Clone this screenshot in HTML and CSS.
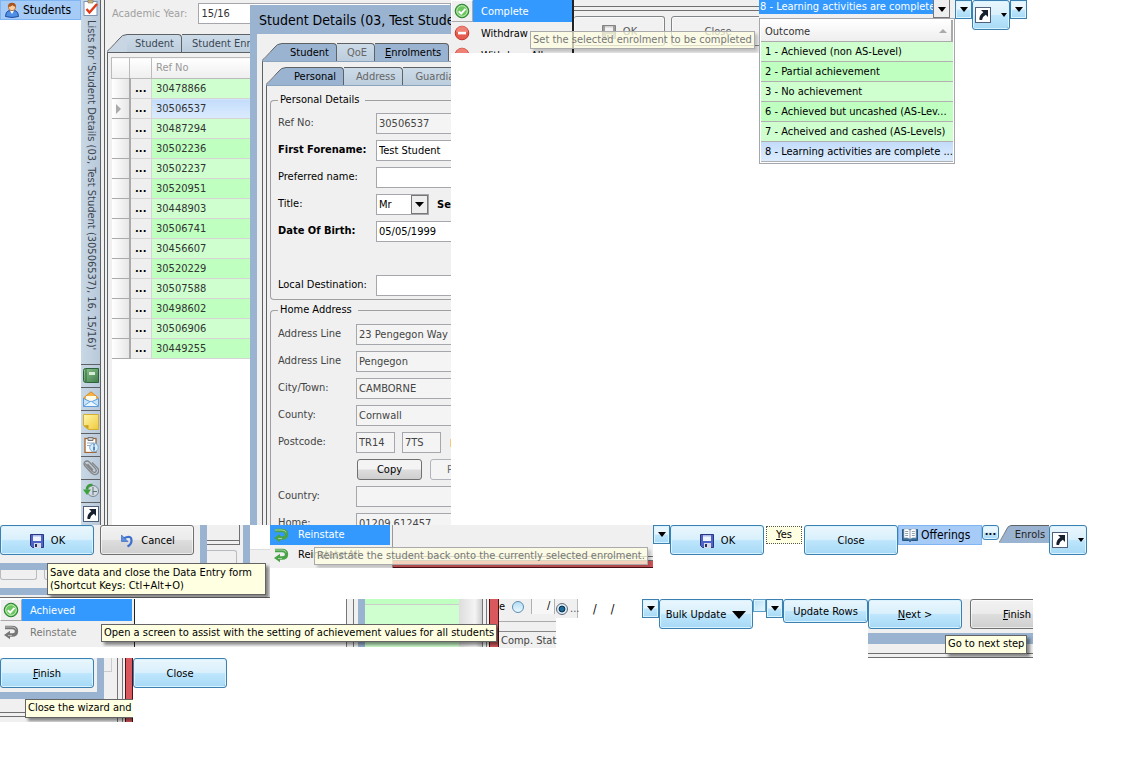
FILE: index.html
```html
<!DOCTYPE html>
<html lang="en">
<head>
<meta charset="utf-8">
<title>Student Details</title>
<link rel="stylesheet" href="styles.css">
</head>
<body>
<svg class="defs" aria-hidden="true">
  <defs>
    <linearGradient id="gBook" x1="0" y1="0" x2="1" y2="1"><stop offset="0" stop-color="#8fc48f"/><stop offset="1" stop-color="#3f7d49"/></linearGradient>
    <linearGradient id="gNote" x1="0" y1="0" x2="1" y2="1"><stop offset="0" stop-color="#fff7a8"/><stop offset="1" stop-color="#f0c93c"/></linearGradient>
    <symbol id="i-user" viewBox="0 0 16 16"><path d="M1.500 14.500Q1.500 9.500 5 8.500L8 10.500 11 8.500Q14.500 9.500 14.500 14.500Q8 16.500 1.500 14.500Z" fill="#4f8fe6" stroke="#1d4ea2"/><path d="M6 9l2 3 2-3z" fill="#fff"/><circle cx="8" cy="5" r="3.700" fill="#fbd0a0" stroke="#a8602c" stroke-width=".8"/><path d="M4.200 5Q4 .8 8 .8T11.800 5Q9.500 4.500 8.500 3.200Q7 4.800 4.200 5Z" fill="#a9541c"/></symbol>
    <symbol id="i-check" viewBox="0 0 16 16"><rect x="1" y="1.500" width="13" height="14" fill="#fff" stroke="#7d93b5"/><path d="M5 0h5v3H5z" fill="#c8b483" stroke="#8c7a4e" stroke-width=".6"/><path d="M3.500 9l3 3.500L14 4" fill="none" stroke="#e03a18" stroke-width="2.400"/></symbol>
    <symbol id="i-ok" viewBox="0 0 16 16"><circle cx="8" cy="8" r="6.800" fill="#4caf43" stroke="#2a8130"/><circle cx="8" cy="8" r="5.300" fill="#6cc75f" stroke="#d7f3d0" stroke-width=".9"/><path d="M4.800 8.200l2.400 2.400 4.300-4.800" fill="none" stroke="#fff" stroke-width="2"/></symbol>
    <symbol id="i-stop" viewBox="0 0 16 16"><circle cx="8" cy="8" r="6.800" fill="#e55b4e" stroke="#c3362b"/><path d="M2 7a6 6 0 0 1 12 0q-6 2-12 0z" fill="#f39184" opacity=".7"/><path d="M4 6.800h8v2.600H4z" fill="#fff"/></symbol>
    <symbol id="i-disk" viewBox="0 0 16 16"><path d="M1.500 1.500h13v13h-11l-2-2z" fill="#4d63c8" stroke="#2c3580"/><path d="M4 2h8v6H4z" fill="#eef4ff"/><path d="M4 2h8v1.500H4z" fill="#a9bbea"/><path d="M5 10h7v5H5z" fill="#d7dbe5"/><path d="M6 11h2v3H6z" fill="#252f65"/></symbol>
    <symbol id="i-undo" viewBox="0 0 16 16"><path d="M4.500 5.500Q12.500 1.500 12.500 7.500Q12.500 11.500 8.500 13.500" fill="none" stroke="#3d70cf" stroke-width="2.200"/><path d="M2.500 2v6.500H9z" fill="#5c8ee0" stroke="#2d5eb8" stroke-width=".6"/></symbol>
    <symbol id="i-back" viewBox="0 0 16 16"><path d="M2 3.500h7q4.500 0 4.500 3.800T9 11H6" fill="none" stroke="currentColor" stroke-width="3.400"/><path d="M7 6.800v8.400L1 11z" fill="currentColor"/><path d="M2 3h7q3.500 0 4 2.500M5 11.500h4" fill="none" stroke="#fff" stroke-width="1" opacity=".5"/></symbol>
    <symbol id="i-short" viewBox="0 0 16 16"><rect x=".5" y=".5" width="15" height="15" fill="#fff" stroke="#506078"/><path d="M6 3h7v7l-2.200-2.200Q7.500 9.500 7 13H4.500Q3.800 8.500 8.300 5.300z" fill="#17202c"/></symbol>
    <symbol id="i-book" viewBox="0 0 16 16"><path d="M2.500.5h13v14h-12q-3 0-3-2v-10q0-2 2-2z" fill="url(#gBook)" stroke="#2c6237"/><path d="M3 1v13" stroke="#2f6939"/><path d="M6 4h6v3H6z" fill="#d6ecd4"/></symbol>
    <symbol id="i-mail" viewBox="0 0 16 16"><path d="M.5 7L8 .8 15.500 7v8H.5z" fill="#f6b342" stroke="#d58b28"/><path d="M3 5h10v7H3z" fill="#fffbe9"/><path d="M.5 7.500L8 11l7.500-3.500v8H.5z" fill="#c5e3fb" stroke="#5e9bdc"/><path d="M.8 15L8 10l7.200 5" fill="#ebf7ff" stroke="#6fa8e2"/></symbol>
    <symbol id="i-note" viewBox="0 0 16 16"><path d="M.5.500h15v15H5.500l-5-4z" fill="url(#gNote)" stroke="#d5ae31"/><path d="M.5 11.500l5-.5v4.500z" fill="#caa021"/></symbol>
    <symbol id="i-clip" viewBox="0 0 16 16"><rect x="2" y="1.500" width="11" height="14" fill="#fff" stroke="#a4642e" stroke-width="1.300"/><path d="M5 .5h5v3H5z" fill="#ccd0d5" stroke="#777"/><path d="M4 6h7M4 8.500h4" stroke="#9aa9bb"/><circle cx="11" cy="10.500" r="4.300" fill="#d8edfc" stroke="#7da8d0"/><path d="M10.300 9.500h1.400v4h-1.400zM10.300 7.200h1.400v1.400h-1.400z" fill="#245fae"/></symbol>
    <symbol id="i-pin" viewBox="0 0 16 16"><path d="M2 3.500l7.500 8q2 1.700 3.200.3t-.2-3.200L6.500 2.200Q4 0 2 1.800t0 4.200l6.500 7q3.500 3 6 .5t0-5.500L9 2.500M4.500 4l5.500 6" fill="none" stroke="#858585" stroke-width="1.300"/></symbol>
    <symbol id="i-hist" viewBox="0 0 16 16"><circle cx="10" cy="8" r="5.500" fill="#d3dbe0" stroke="#77868f"/><path d="M10 4v4.500h4M10 8v4" fill="none" stroke="#60717b"/><path d="M9.500 2Q4 1.500 3.800 6.500" fill="none" stroke="#3a9a3a" stroke-width="2.500"/><path d="M0 6.500h8L4 12z" fill="#3ca23c"/></symbol>
    <symbol id="i-open" viewBox="0 0 16 14"><path d="M.5 1.500h15v11H9.500L8 13.500 6.500 12.500h-6z" fill="#396d9c" stroke="#285680"/><path d="M2 1q3.500-1 6 1 2.500-2 6-1v9q-3.500-.8-6 1-2.500-1.800-6-1z" fill="#fff" stroke="#93a6b8" stroke-width=".6"/><path d="M8 2v9M3.200 3.500h3M3.200 5.500h3M3.200 7.500h3M9.800 3.500h3M9.800 5.500h3M9.800 7.500h3" stroke="#72889c" stroke-width=".8"/></symbol>
    <symbol id="i-slope" viewBox="0 0 20 18" preserveAspectRatio="none"><path d="M0 18Q4 15 12 5Q15 .5 20 .5V18Z" fill="currentColor"/><path d="M0 17.500Q3 15 12 5Q15 .5 20 .5" fill="none" stroke="#5f6265"/></symbol>
    <symbol id="i-down" viewBox="0 0 8 5" preserveAspectRatio="none"><path d="M0 0h8L4 5z" fill="#000"/></symbol>
  </defs>
</svg>

<main class="sheet">
  <div class="strip">
    <button class="nav nav-students"><svg class="ic"><use href="#i-user"/></svg>Students</button>

    <section class="app">
      <aside class="rail">
        <svg class="ic"><use href="#i-check"/></svg>
        <span class="rail-title">Lists for 'Student Details (03, Test Student (30506537), 16, 15/16)'</span>
        <button class="rail-btn" aria-label="Book"><svg class="ic"><use href="#i-book"/></svg></button>
        <button class="rail-btn" aria-label="Mail"><svg class="ic"><use href="#i-mail"/></svg></button>
        <button class="rail-btn" aria-label="Notes"><svg class="ic"><use href="#i-note"/></svg></button>
        <button class="rail-btn" aria-label="Information"><svg class="ic"><use href="#i-clip"/></svg></button>
        <button class="rail-btn" aria-label="Attachments"><svg class="ic"><use href="#i-pin"/></svg></button>
        <button class="rail-btn" aria-label="History"><svg class="ic"><use href="#i-hist"/></svg></button>
        <button class="rail-btn" aria-label="Shortcuts"><svg class="ic"><use href="#i-short"/></svg></button>
      </aside>
      <div class="lists">
        <div class="year"><label for="year">Academic Year:</label><input id="year" class="field" value="15/16"></div>
        <div class="tabs tabs-list">
          <button class="tab first"><svg class="slope"><use href="#i-slope"/></svg><span>Student</span></button><button class="tab"><span>Student Enrolments</span></button>
        </div>
        <div class="grid-frame">
          <table class="refs">
            <thead><tr><th class="c-head"></th><th class="c-more"></th><th>Ref No</th></tr></thead>
            <tbody>
              <tr><td></td><td><button>...</button></td><td>30478866</td></tr>
              <tr class="sel"><td></td><td><button>...</button></td><td>30506537</td></tr>
              <tr><td></td><td><button>...</button></td><td>30487294</td></tr>
              <tr><td></td><td><button>...</button></td><td>30502236</td></tr>
              <tr><td></td><td><button>...</button></td><td>30502237</td></tr>
              <tr><td></td><td><button>...</button></td><td>30520951</td></tr>
              <tr><td></td><td><button>...</button></td><td>30448903</td></tr>
              <tr><td></td><td><button>...</button></td><td>30506741</td></tr>
              <tr><td></td><td><button>...</button></td><td>30456607</td></tr>
              <tr><td></td><td><button>...</button></td><td>30520229</td></tr>
              <tr><td></td><td><button>...</button></td><td>30507588</td></tr>
              <tr><td></td><td><button>...</button></td><td>30498602</td></tr>
              <tr><td></td><td><button>...</button></td><td>30506906</td></tr>
              <tr><td></td><td><button>...</button></td><td>30449255</td></tr>
            </tbody>
          </table>
        </div>
      </div>
      <div class="dialog">
        <h1 class="dialog-title">Student Details (03, Test Student)</h1>
        <div class="dialog-body">
          <div class="tabs active-tabs">
            <button class="tab first on"><svg class="slope"><use href="#i-slope"/></svg><span>Student</span></button><button class="tab"><span>QoE</span></button><button class="tab on"><span><u>E</u>nrolments</span></button>
          </div>
          <div class="page outer">
            <div class="tabs active-tabs">
              <button class="tab first on"><svg class="slope"><use href="#i-slope"/></svg><span>Personal</span></button><button class="tab"><span class="wide">Address</span></button><button class="tab"><span class="wide">Guardians</span></button>
            </div>
            <div class="page inner">
              <fieldset class="personal">
                <legend>Personal Details</legend>
                <div class="row dim"><label for="ref">Ref No:</label><input id="ref" class="field ro" value="30506537" readonly></div>
                <div class="row"><label for="fn"><b>First Forename:</b></label><input id="fn" class="field" value="Test Student"></div>
                <div class="row"><label for="pn">Preferred name:</label><input id="pn" class="field"></div>
                <div class="row"><label for="ti">Title:</label><span class="combo"><select id="ti"><option>Mr</option></select><svg class="arrow"><use href="#i-down"/></svg></span><b class="sex">Sex:</b></div>
                <div class="row dob"><label for="dob"><b>Date Of Birth:</b></label><input id="dob" class="field" value="05/05/1999"></div>
                <div class="row"><label for="ld">Local Destination:</label><input id="ld" class="field"></div>
              </fieldset>
              <fieldset class="home">
                <legend>Home Address</legend>
                <div class="row dim"><label for="a1">Address Line</label><input id="a1" class="field ro" value="23 Pengegon Way" readonly></div>
                <div class="row dim"><label for="a2">Address Line</label><input id="a2" class="field ro" value="Pengegon" readonly></div>
                <div class="row dim"><label for="ct">City/Town:</label><input id="ct" class="field ro" value="CAMBORNE" readonly></div>
                <div class="row dim"><label for="co">County:</label><input id="co" class="field ro" value="Cornwall" readonly></div>
                <div class="row dim"><label for="pc">Postcode:</label><input id="pc" class="field ro short" value="TR14" readonly><input aria-label="Postcode, second part" class="field ro short" value="7TS" readonly><i class="mark"></i></div>
                <div class="row"><label></label><button class="copy">Copy</button><button class="copy paste">Paste</button></div>
                <div class="row dim"><label for="cy">Country:</label><input id="cy" class="field ro" readonly></div>
                <div class="row dim"><label for="ho">Home:</label><input id="ho" class="field ro" value="01209 612457" readonly></div>
              </fieldset>
            </div>
          </div>
        </div>
      </div>
    </section>

    <section class="clip complete">
      <div class="menu">
        <button class="item hot"><span class="cell"><svg class="ic"><use href="#i-ok"/></svg></span><span class="txt">Complete</span></button>
        <button class="item"><span class="cell"><svg class="ic"><use href="#i-stop"/></svg></span><span class="txt">Withdraw</span></button>
        <button class="item"><span class="cell"><svg class="ic"><use href="#i-stop"/></svg></span><span class="txt">Withdraw All</span></button>
      </div>
      <div class="under">
        <hr class="double">
        <div class="pair"><button class="btn grey off ok"><svg class="ic"><use href="#i-disk"/></svg>OK</button><button class="btn grey off">Close</button></div>
      </div>
      <div class="tip faded tip-complete">Set the selected enrolment to be completed</div>
    </section>

    <section class="outcome">
      <div class="chosen"><span>8 - Learning activities are complete</span><button class="drop" aria-label="Open list"><svg class="arrow"><use href="#i-down"/></svg></button></div>
      <table class="choices">
        <thead><tr><th>Outcome<i class="sort"></i></th></tr></thead>
        <tbody>
          <tr><td>1 - Achieved (non AS-Level)</td></tr>
          <tr><td>2 - Partial achievement</td></tr>
          <tr><td>3 - No achievement</td></tr>
          <tr><td>6 - Achieved but uncashed (AS-Lev...</td></tr>
          <tr><td>7 - Acheived and cashed (AS-Levels)</td></tr>
          <tr class="sel"><td>8 - Learning activities are complete ...</td></tr>
        </tbody>
      </table>
    </section>
    <button class="mini" aria-label="Open"><svg class="arrow"><use href="#i-down"/></svg></button>
    <button class="btn blue split" aria-label="Shortcuts"><svg class="ic"><use href="#i-short"/></svg><svg class="arrow"><use href="#i-down"/></svg></button>
    <button class="mini" aria-label="Open"><svg class="arrow"><use href="#i-down"/></svg></button>
  </div>

  <div class="strip second">
    <section class="clip save">
      <div class="save-top">
        <div class="win"><button class="btn blue"><svg class="ic"><use href="#i-disk"/></svg>OK</button><button class="btn grey"><svg class="ic"><use href="#i-undo"/></svg>Cancel</button></div>
        <div class="behind"><div class="box-a"></div><div class="box-b"></div></div>
        <div class="bar"></div>
        <div class="blank"></div>
      </div>
      <div class="save-low"><div class="stubs"><i></i><i></i></div><div class="band"></div></div>
      <div class="tip tip-save">Save data and close the Data Entry form<br>(Shortcut Keys: Ctl+Alt+O)</div>
    </section>
    <section class="clip reinstate">
      <div class="menu">
        <button class="item hot"><span class="cell green"><svg class="ic"><use href="#i-back"/></svg></span><span class="txt">Reinstate</span></button>
        <button class="item"><span class="cell green"><svg class="ic"><use href="#i-back"/></svg></span><span class="txt">Reinstate All</span></button>
      </div>
      <div class="under"><hr class="double"><div class="red-band"></div></div>
      <div class="tip faded tip-reinstate">Reinstate the student back onto the currently selected enrolment.</div>
    </section>
    <button class="mini" aria-label="Open"><svg class="arrow"><use href="#i-down"/></svg></button>
    <button class="btn blue"><svg class="ic"><use href="#i-disk"/></svg>OK</button>
    <button class="yes"><u>Y</u>es</button>
    <button class="btn blue">Close</button>
    <button class="nav nav-offerings"><svg class="ic"><use href="#i-open"/></svg>Offerings</button>
    <button class="mini dots">...</button>
    <button class="tab enrols on"><svg class="slope"><use href="#i-slope"/></svg><span>Enrols</span></button>
    <button class="btn blue split" aria-label="Shortcuts"><svg class="ic"><use href="#i-short"/></svg><svg class="arrow"><use href="#i-down"/></svg></button>
  </div>

  <div class="strip third">
    <section class="clip achieved">
      <div class="menu">
        <button class="item hot"><span class="cell"><svg class="ic"><use href="#i-ok"/></svg></span><span class="txt">Achieved</span></button>
        <button class="item off"><span class="cell"><svg class="ic"><use href="#i-back"/></svg></span><span class="txt">Reinstate</span></button>
      </div>
      <div class="edge"><i class="lines"></i><i class="blue-bar"></i><i class="green-pane"></i><i class="scroll"></i><i class="lines"></i><i class="red-bar"></i></div>
      <div class="tip tip-achieved">Open a screen to assist with the setting of achievement values for all students</div>
    </section>
    <section class="comp">
      <div class="comp-top"><span>e</span><input type="radio" name="mode" aria-label="Complete"><span class="datebox">/</span></div>
      <div class="comp-mid"></div>
      <div class="comp-label">Comp. Stat</div>
    </section>
    <label class="pick"><input type="radio" name="pick" checked><span>...</span></label>
    <div class="slashes"><span>/</span><span>/</span></div>
    <button class="mini" aria-label="Open"><svg class="arrow"><use href="#i-down"/></svg></button>
    <button class="btn blue bulk">Bulk Update<svg class="arrow"><use href="#i-down"/></svg></button>
    <input class="tick" type="checkbox" aria-label="Select">
    <button class="mini" aria-label="Open"><svg class="arrow"><use href="#i-down"/></svg></button>
    <button class="btn blue update">Update Rows</button>
    <section class="clip next">
      <div class="pair"><button class="btn blue"><span><u>N</u>ext &gt;</span></button><button class="btn grey"><span><u>F</u>inish</span></button></div>
      <div class="band"></div>
      <hr class="double">
      <div class="tip tip-next">Go to next step</div>
    </section>
  </div>

  <div class="strip">
    <section class="clip finish">
      <div class="finish-main">
        <div class="win"><button class="btn blue"><span><u>F</u>inish</span></button></div>
        <hr class="double">
      </div>
      <div class="edge"><i class="nub"></i><i class="lines"></i><i class="red-bar"></i></div>
      <div class="tip tip-finish">Close the wizard and</div>
    </section>
    <button class="btn blue">Close</button>
  </div>
</main>
</body>
</html>
```

FILE: styles.css
```css
* { box-sizing: border-box; }
body { margin: 0; background: #fff; color: #000; font: 11px/14px "DejaVu Sans Condensed", "Noto Sans", sans-serif; }
button, input, select { font: inherit; color: inherit; margin: 0; padding: 0; }
button { border: 0; background: none; white-space: nowrap; }
.defs { position: absolute; width: 0; height: 0; }
.ic { width: 16px; height: 16px; flex: none; display: block; }
.arrow { width: 8px; height: 5px; flex: none; }

.strip { display: flex; align-items: flex-start; }
.strip > * { flex: none; }
.second { min-height: 74px; }
.third { min-height: 59px; }
.clip { position: relative; overflow: hidden; background: #f0f0f0; }

/* Buttons */
.btn { width: 94px; height: 30px; padding-top: 2px; display: flex; align-items: center; justify-content: center; gap: 6px; border: 1px solid #707070; border-radius: 3px; flex: none; box-shadow: inset 0 0 0 1px rgba(255,255,255,.6); }
.blue { border-color: #3c7fb1; background: linear-gradient(#eaf6fd 0, #d9f0fc 48%, #bee6fd 52%, #a7d9f5 100%); box-shadow: inset 0 0 0 1px #d9f3ff, inset -1px -1px 0 #6dadd5; }
.grey { background: linear-gradient(#f2f2f2 0, #ebebeb 48%, #dddddd 52%, #cfcfcf 100%); }
.grey.off { background: #f1f1f1; color: #555; border-color: #808588; }
.grey.off .ic { filter: grayscale(1); opacity: .6; }
.mini { width: 17px; height: 19px; display: flex; align-items: center; justify-content: center; border: 1px solid #3c7fb1; background: linear-gradient(#eaf6fd 48%, #bee6fd 52%, #a7d9f5); box-shadow: inset 0 0 0 1px #d9f3ff; }
.mini.dots { height: 15px; border-radius: 3px; font-weight: bold; line-height: 6px; padding-bottom: 2px; }
.split { width: 38px; gap: 10px; padding: 0; }
.split .arrow { width: 6px; height: 4px; }
.nav { height: 20px; padding: 0 11px 0 3px; display: flex; align-items: center; gap: 3px; border: 1px solid #7fb5f2; background: #a6cbf7; font-size: 12px; }
.nav-students { width: 81px; }
.nav-offerings { width: 84px; }

/* Application window */
.app { position: relative; display: flex; width: 370px; height: 525px; overflow: hidden; background: #f0f0f0; }
.rail { width: 20px; flex: none; display: flex; flex-direction: column; align-items: center; background: linear-gradient(90deg, #c9d8e5, #b9c9da); border-right: 1px solid #5f6265; }
.rail-title { flex: 1; padding-top: 4px; writing-mode: vertical-rl; white-space: nowrap; color: #3b4650; }
.rail-btn { width: 19px; height: 23px; flex: none; display: flex; align-items: center; justify-content: center; border-top: 1px solid #5f6265; }
.lists { flex: 1; min-width: 0; margin-left: 3px; border-left: 1px solid #5f6265; }
.year { display: flex; align-items: center; gap: 11px; padding: 3px 0 0 7px; color: #a0a0a0; white-space: nowrap; }
.year .field { color: #333; flex: 1; }
.field { height: 21px; min-width: 0; border: 1px solid #a5a7ac; background: #fff; padding: 0 2px; }
.field.ro { background: #f4f4f4; }

.tabs { display: flex; height: 18px; white-space: nowrap; }
.tabs-list { margin: 10px 0 0 2px; }
.tab { display: flex; flex: none; height: 18px; color: #c8d6e4; }
.tab span { height: 18px; line-height: 17px; padding: 0 7px 0 10px; background: linear-gradient(#cddbe8, #bccddd); border: 1px solid #5f6265; border-width: 1px 1px 0 0; border-radius: 0 4px 0 0; color: #3a4652; }
.tab .wide { padding-left: 12px; padding-right: 7px; }
.tab.first span { padding-left: 8px; }
.slope { width: 20px; height: 18px; flex: none; color: inherit; }
.tab.on { color: #9ab3d1; }
.tab.on span { background: #9ab3d1; color: #000; }
.active-tabs .tab:not(.on) span { color: #666; }
.grid-frame { margin: 0 0 0 2px; padding: 4px 0 0 3px; height: 473px; border-top: 1px solid #5f6265; border-left: 1px solid #5f6265; background: linear-gradient(#fff, #fff) 4px 5px no-repeat; }
.refs { width: 100%; border-collapse: collapse; table-layout: fixed; color: #333; }
.refs tr { height: 20px; }
.refs th { height: 21px; padding: 0 4px; text-align: left; font-weight: normal; color: #999; background: linear-gradient(#fff, #eee); border: 1px solid #bbb; }
.refs .c-head { width: 18px; }
.refs .c-more { width: 22px; }
.refs td { padding: 0 4px; border-bottom: 1px solid #d5d5d5; border-right: 1px solid #d5d5d5; background: #cfffcf; }
.refs tr:nth-child(even) td { background: #bfffbf; }
.refs tr.sel td { background: linear-gradient(#c3dcfb, #dcecfe); }
.refs tr td:first-child { background: linear-gradient(90deg, #fff, #e6e6e6); border-right: 2px solid #aaa; border-bottom-color: #aaa; }
.refs tr td:nth-child(2) { background: #efefef; padding: 0; text-align: center; }
.refs td button { font-weight: bold; color: #000; line-height: 12px; }
.refs tr.sel td:first-child::before { content: ""; display: block; width: 0; border: 5px solid transparent; border-left-color: #aaa; border-right: 0; }

/* Student dialog lies over the list */
.dialog { position: absolute; left: 169px; top: 5px; right: 0; bottom: 0; overflow: hidden; padding-left: 7px; background: #9ab3d1; }
.dialog-title { margin: 0; height: 29px; padding-left: 2px; font-size: 14px; line-height: 30px; font-weight: normal; white-space: nowrap; overflow: hidden; }
.dialog-body { height: 491px; padding: 9px 0 0 5px; background: #f0f0f0; }
.page { border: 1px solid #5f6265; border-width: 1px 0 0 1px; }
.active-tabs + .page { border-top-color: #8ba3bd; }
.outer { height: 464px; padding: 5px 0 0 3px; }
.inner { height: 442px; padding: 7px 0 0 3px; }
fieldset { min-width: 0; margin: 0; padding: 6px 0 3px 7px; border: 1px solid #a0a0a0; border-right: 0; border-radius: 4px 0 0 4px; }
fieldset.home { margin-top: 3px; padding-top: 7px; }
legend { padding: 0 6px 0 2px; }
.row { display: flex; align-items: center; height: 21px; margin-bottom: 6px; white-space: nowrap; }
.row label { width: 98px; flex: none; padding-bottom: 2px; }
.home .row label { width: 78px; }
.personal .row:last-child { margin-bottom: 0; }
.row .field { flex: 1; border-right: 0; }
.row .short { flex: 0 0 39px; border-right: 1px solid #a5a7ac; margin-right: 7px; }
.dim { color: #444; }
.row.dob { margin-bottom: 33px; }
.combo { position: relative; display: flex; flex: none; width: 53px; height: 21px; border: 1px solid #a5a7ac; background: #fff; }
.combo select { appearance: none; width: 100%; border: 0; padding: 0 2px; background: none; }
.combo .arrow { position: absolute; right: 0; top: 0; width: 17px; height: 19px; padding: 6px 3px; border: 1px solid #777; background: #eee; }
.sex { margin-left: 8px; }
.mark { width: 2px; height: 8px; background: #f0cb78; margin-left: 2px; }
.copy { width: 65px; height: 21px; flex: none; border: 1px solid #707070; border-radius: 3px; background: linear-gradient(#f4f4f4 48%, #ddd 52%, #cfcfcf); margin-left: 1px; }
.paste { margin-left: 8px; padding-left: 16px; text-align: left; background: #f4f4f4; border-color: #b0b4b8; color: #666; }

/* Menus */
.menu { flex: none; background: #f0f0f0; }
.item { display: flex; width: 100%; height: 22px; text-align: left; }
.cell { width: 22px; flex: none; display: flex; align-items: center; justify-content: center; }
.txt { flex: 1; padding-left: 8px; line-height: 23px; }
.hot .txt { background: #3399ff; color: #fff; }
.hot .cell { border: 1px solid #aaa; border-left-color: #fff; border-top-color: #fff; }
.item.off { color: #777; }
.double { margin: 0; height: 5px; border: 1px solid #707070; border-width: 1px 0; }
.tip { position: absolute; padding: 1px 2px; background: #ffffe1; border: 1px solid #646464; box-shadow: 3px 3px 3px rgba(0,0,0,.45); white-space: nowrap; }
.faded { background: rgba(255,255,225,.72); color: #777; border-color: #aaa; box-shadow: 3px 3px 3px rgba(0,0,0,.2); }
.under { flex: 1; min-width: 0; }
.pair { display: flex; gap: 8px; }

.complete { display: flex; width: 308px; height: 53px; }
.complete .menu { width: 123px; border-right: 2px solid #222; }
.complete .under { padding-top: 6px; }
.complete .pair { margin-top: 5px; gap: 6px; }
.complete .btn.ok { width: 91px; border-left: 0; }
.tip-complete { left: 79px; top: 31px; }

.outcome { width: 196px; }
.chosen { display: flex; height: 18px; background: #f0f0f0; white-space: nowrap; }
.chosen span { width: 174px; padding-left: 1px; background: #3399ff; color: #fff; height: 14px; }
.drop { width: 17px; height: 18px; border: 1px solid #777; border-top: 0; background: #eee; }
.choices { width: 196px; height: 144px; border: 1px solid #a5a7ac; border-spacing: 0; padding: 1px; table-layout: fixed; }
.choices th { height: 22px; padding: 2px 4px 0; background: linear-gradient(#fff, #eee); border: 1px solid #aaa; border-width: 0 2px 1px 0; text-align: left; font-weight: normal; color: #333; }
.sort { float: right; margin-top: 4px; border: 4px solid transparent; border-top: 0; border-bottom-color: #aaa; }
.choices td { height: 20px; padding: 0 4px; background: #cfffcf; border-bottom: 1px solid #b0b0b0; white-space: nowrap; overflow: hidden; }
.choices tr:nth-child(even) td { background: #bfffbf; }
.choices tr.sel td { background: linear-gradient(#c3dcfb, #dcecfe); }

/* Save prompt */
.save { width: 270px; height: 73px; }
.save-top { display: flex; height: 45px; }
.save .win { width: 207px; display: flex; gap: 6px; border: 0 solid #9ab3d1; border-width: 0 7px 7px 0; }
.behind { width: 36px; }
.box-a { height: 20px; width: 33px; border: 1px solid #707070; border-left: 0; border-top: 0; box-shadow: inset 0 -3px #f0f0f0, inset 0 -4px #707070; }
.box-b { margin-top: 5px; height: 20px; width: 30px; border: 1px solid #b8bcc0; border-width: 1px 1px 0 0; border-radius: 0 3px 0 0; }
.bar { width: 7px; background: #9ab3d1; }
.blank { flex: 1; height: 25px; background: #fff; border-bottom: 1px solid #ddd; }
.stubs { display: flex; gap: 7px; height: 10px; }
.stubs i { width: 37px; border: 1px solid #b8bcc0; border-top: 0; border-radius: 0 0 3px 3px; }
.band { background: #9ab3d1; }
.save .band { height: 7px; width: 50px; margin-top: 8px; }
.save-low { height: 28px; border-bottom: 1px solid #707070; }
.tip-save { left: 47px; top: 38px; width: 219px; height: 32px; line-height: 13px; padding-top: 2px; }

.reinstate { display: flex; width: 383px; height: 43px; }
.reinstate .menu { width: 123px; border-right: 1px solid #999; padding-right: 2px; }
.reinstate .item { height: 20px; }
.reinstate .txt { line-height: 20px; padding-left: 6px; }
.reinstate .hot { background: #3399ff; }
.reinstate .hot .cell { border: 0; }
.green { color: #4aa347; }
.reinstate .under { padding-top: 31px; }
.red-band { height: 7px; background: #d9585d; border-bottom: 1px solid #501015; }
.tip-reinstate { left: 44px; top: 22px; }
.yes { width: 36px; height: 18px; margin: 1px 2px 0; border: 1px dotted #555; background: #ffffe1; }
.enrols { width: 50px; overflow: hidden; }
.enrols .slope { width: 12px; }
.tab.enrols span { flex: 1; padding: 0; border-right: 0; border-radius: 0; color: #222; }

/* Achievement menu */
.achieved { display: flex; width: 499px; height: 48px; background: #fff; justify-content: space-between; }
.achieved .menu { width: 135px; border-right: 1px solid #222; padding-right: 2px; }
.edge { display: flex; flex: none; background: #f0f0f0; }
.achieved .edge { width: 153px; }
.lines { width: 8px; flex: none; border: 1px solid #777; border-width: 0 1px; }
.blue-bar { width: 7px; flex: none; margin-left: 4px; background: #9ab3d1; }
.green-pane { width: 94px; flex: none; background: linear-gradient(#bfffbf 5px, #ccc 5px, #ccc 6px, #cfffcf 6px); }
.scroll { width: 23px; flex: none; background: linear-gradient(90deg, #ddd, #f4f4f4 70%, #ccc); }
.scroll + .lines { width: 5px; }
.red-bar { flex: 1; margin-left: 2px; background: #d9585d; border: 1px solid #501015; border-width: 0 1px; }
.tip-achieved { left: 101px; top: 25px; }
.comp { width: 57px; background: #f0f0f0; }
.comp-top { display: flex; height: 15px; align-items: center; gap: 7px; overflow: hidden; }
input[type=radio] { appearance: none; width: 12px; height: 12px; flex: none; border: 1px solid #5c8db0; border-radius: 50%; background: linear-gradient(#b5def5, #e9f8ff); }
input[type=radio]:checked { border: 1px solid #667; background: radial-gradient(circle, #1a6d9e 0 25%, #123 45%, #d9eefb 52%); }
.datebox { flex: none; width: 24px; height: 16px; padding-left: 15px; border: 1px solid #b0b0b0; border-top: 0; background: #f7f7f7; }
.comp-mid { height: 18px; border-bottom: 1px solid #888; background: linear-gradient(#f0f0f0 7px, #aaa 7px, #aaa 8px, #f0f0f0 8px); }
.comp-label { height: 16px; padding: 2px 0 0 2px; color: #444; white-space: nowrap; }
.pick { width: 22px; height: 19px; display: flex; align-items: center; gap: 2px; background: #f0f0f0; border-right: 1px solid #bbb; color: #555; }
.slashes { width: 64px; display: flex; gap: 14px; padding: 3px 0 0 15px; font-size: 12px; }
.bulk .arrow { width: 14px; height: 8px; }
.tick { appearance: none; width: 13px; height: 13px; border: 1px solid #5c9cc5; background: linear-gradient(135deg, #b5def5, #e9f8ff); box-shadow: inset 0 0 0 1px #d9f3ff; }
.update { width: 85px; height: 24px; }
.next { width: 165px; height: 59px; }
.next .band { height: 11px; margin: 4px 0 9px; }
.tip-next { left: 77px; top: 36px; height: 19px; }

/* Finish prompt */
.finish { display: flex; width: 133px; height: 64px; }
.finish-main { width: 104px; }
.finish .win { height: 41px; border: 0 solid #9ab3d1; border-width: 0 7px 7px 0; }
.finish .double { margin-top: 13px; }
.nub { width: 8px; height: 14px; flex: none; border: 1px solid #ccc; border-top: 0; border-left: 0; margin-right: 5px; }
.finish .edge { width: 29px; }
.finish .lines { width: 6px; }
.tip-finish { left: 25px; top: 41px; height: 19px; width: 120px; }
```
